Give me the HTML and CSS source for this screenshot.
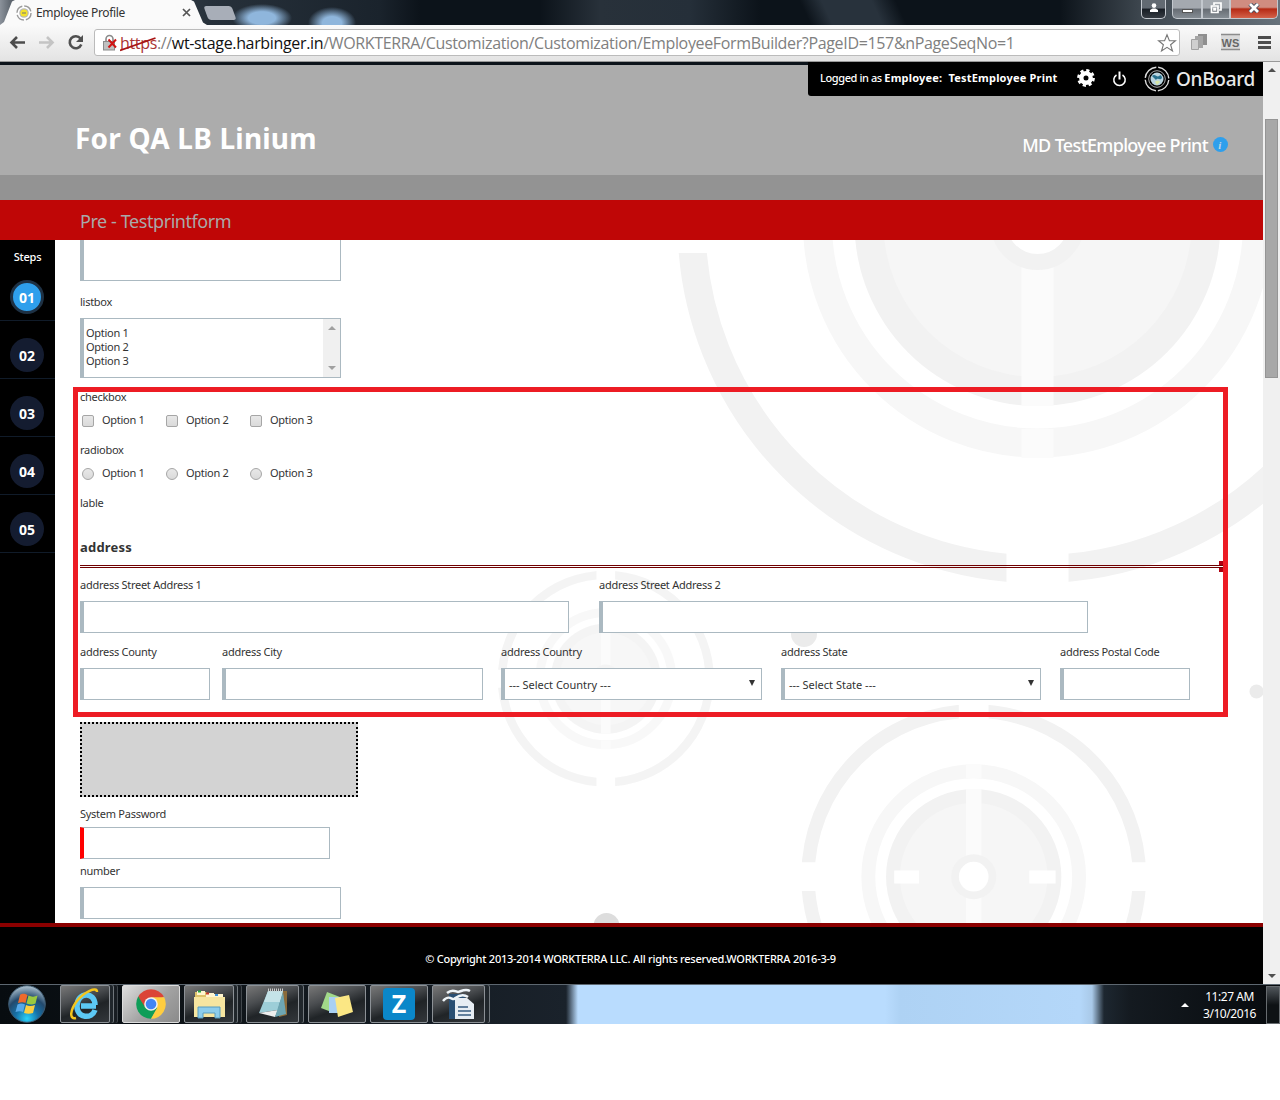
FILE: index.html
```html
<!DOCTYPE html>
<html lang="en">
<head>
  <meta charset="UTF-8">
  <title>Employee Profile</title>
  <link rel="stylesheet" href="styles.css">
</head>
<body>
  <div class="tabstrip">
    <div class="tab">
      <svg width="16" height="16" viewBox="0 0 16 16"><circle cx="8" cy="8" r="7" fill="#fff" stroke="#999" stroke-width="1.4" stroke-dasharray="9 2"/><circle cx="8" cy="8" r="4.8" fill="#b9b9b9"/><circle cx="8" cy="8" r="3.6" fill="#f4e22a"/><path d="M6 8h4" stroke="#777"/></svg>
      <span class="tab-title">Employee Profile</span>
      <svg class="tab-close" width="9" height="9" viewBox="0 0 9 9"><path d="M1 1l7 7M8 1l-7 7" stroke="#555" stroke-width="1.7"/></svg>
    </div>
    <div class="newtab"></div>
    <div class="window-buttons">
      <span class="wbtn user"><svg width="10" height="10" viewBox="0 0 10 10"><circle cx="5" cy="2.6" r="2.3" fill="#fff"/><path d="M1 9V7l2.500-1.500h3L9 7v2z" fill="#fff"/></svg></span>
      <span class="wbtn min"><i></i></span>
      <span class="wbtn max"><svg width="12" height="12" viewBox="0 0 12 12"><path d="M4 3V1h7v7H9M1.500 4h6.500v6.500H1.500zM4 6.500h1.500V8H4z" fill="none" stroke="#fff" stroke-width="1.700"/></svg></span>
      <span class="wbtn close"><svg width="12" height="10" viewBox="0 0 12 10"><path d="M2 1l8 8M10 1L2 9" stroke="#434b5c" stroke-width="4.500"/><path d="M2 1l8 8M10 1L2 9" stroke="#fff" stroke-width="2.800"/></svg></span>
    </div>
  </div>

  <div class="toolbar">
    <svg class="nav-icons" width="94" height="35" viewBox="0 0 94 35">
      <path d="M25 17.500H12M17 12l-5.500 5.500L17 23" fill="none" stroke="#4d4d4d" stroke-width="2.600"/>
      <path d="M39 17.500h13M47 12l5.500 5.500L47 23" fill="none" stroke="#c4c4c4" stroke-width="2.600"/>
      <path d="M80.500 13.500a6 6 0 1 0 .8 6" fill="none" stroke="#505050" stroke-width="2.600"/><path d="M83 10v7h-7z" fill="#505050"/>
    </svg>
    <div class="urlbar">
      <svg width="18" height="18" viewBox="0 0 18 18"><path d="M4 8V5a3.500 3.500 0 0 1 7 0v3" fill="none" stroke="#8b8b8b" stroke-width="1.600"/><rect x="1.500" y="7.500" width="11" height="8.500" fill="#c0c0c0" stroke="#8b8b8b"/><path d="M6.500 5.500l7.500 8M14 5.500l-7.500 8" stroke="#d01414" stroke-width="2"/></svg>
      <span class="url"><span class="scheme">https<svg class="strike" width="36" height="15" viewBox="0 0 36 15"><path d="M0 13.500L35.500 1" stroke="#a81414" stroke-width="1.800"/></svg></span>://<b>wt-stage.harbinger.in</b>/WORKTERRA/Customization/Customization/EmployeeFormBuilder?PageID=157&amp;nPageSeqNo=1</span>
      <svg class="star" width="20" height="20" viewBox="0 0 20 20"><path d="M10 1.800l2.400 6h6l-4.800 3.900 1.900 6.300L10 14.300 4.500 18l1.900-6.300L1.600 7.800h6z" fill="#fff" stroke="#777" stroke-width="1.100"/></svg>
    </div>
    <svg width="100" height="35" viewBox="0 0 100 35">
      <path d="M18 9h9v11h-4v-3h-5z" fill="#8f8f8f"/><path d="M15 11h8v12h-8z" fill="#a5a5a5"/><path d="M11.500 14.500h7v10h-7z" fill="#cfcfcf" stroke="#a2a2a2"/>
      <rect x="41" y="9" width="19" height="16" fill="#dadada"/><path d="M41 9.500h19M41 24.500h19" stroke="#8c8c8c" stroke-width="1.600"/>
      <text x="41.500" y="21.500" class="ws">WS</text>
      <path d="M78 12.500h13M78 17.500h13M78 22.500h13" stroke="#4d4d4d" stroke-width="3"/>
    </svg>
  </div>

  <div class="viewport">
    <div class="page">
      <div class="userbar">
        <span class="logged">Logged in as <b>Employee:&nbsp; TestEmployee Print</b></span>
        <svg class="gear" width="18" height="18" viewBox="0 0 18 18"><circle cx="9" cy="9" r="7.600" fill="none" stroke="#fff" stroke-width="2.600" stroke-dasharray="3.200 2.770"/><circle cx="9" cy="9" r="4.700" fill="none" stroke="#fff" stroke-width="4.400"/></svg>
        <svg class="power" width="15" height="16" viewBox="0 0 15 16"><path d="M4.500 4a5.700 5.700 0 1 0 6 0" fill="none" stroke="#fff" stroke-width="1.500"/><path d="M7.500 0.500v8" stroke="#fff" stroke-width="2"/></svg>
        <svg class="logo" width="26" height="26" viewBox="0 0 26 26"><circle cx="13" cy="13" r="11.800" fill="none" stroke="#ddd" stroke-width="1.400" stroke-dasharray="16.500 2" stroke-dashoffset="-1"/><circle cx="13" cy="13" r="8.300" fill="none" stroke="#aaa"/><circle cx="13" cy="13" r="6.500" fill="#b9d4df"/><path d="M8 10c3-3 5 2 7 0s3 1 3 2c-2 3-4-1-6 2z" fill="#27708d"/><path d="M11 16c2-2 5-1 5 0l-3 3z" fill="#d8e6a5"/></svg>
        <span class="brand">OnBoard</span>
      </div>
      <div class="banner">
        <h1>For QA LB Linium</h1>
        <div class="employee"><span>MD TestEmployee Print</span> <svg width="15" height="15" viewBox="0 0 15 15"><circle cx="7.500" cy="7.500" r="7.500" fill="#2e9fec"/><text x="5.300" y="11.600" class="info">i</text></svg></div>
      </div>
      <div class="subbar"></div>
      <div class="titlebar"><span>Pre - Testprintform</span></div>

      <div class="content">
        <div class="steps">
          <div class="steps-head">Steps</div>
          <div class="step active"><span>01</span></div>
          <div class="step"><span>02</span></div>
          <div class="step"><span>03</span></div>
          <div class="step"><span>04</span></div>
          <div class="step"><span>05</span></div>
        </div>

        <div class="main">
          <svg class="pattern" width="1208" height="683" viewBox="55 240 1208 683">
            <defs>
              <!-- target drawn at its largest size, centred on 0,0 -->
              <g id="target">
                <circle r="346" fill="none" stroke="#f2f2f2" stroke-width="28"/>
                <path d="M-31-365h62v60h-62zM-31 305h62v60h-62zM-365-30h60v60h-60zM305-30h60v60h-60z" fill="#fff"/>
                <circle r="220" fill="none" stroke="#f7f7f7" stroke-width="29"/>
                <circle r="183" fill="#f2f2f2"/>
                <circle r="154" fill="#f6f6f6"/>
                <path d="M-16-235h32v29h-32zM-16-183h32v366h-32zM-16 206h32v29h-32z" fill="#fbfbfb"/>
                <circle r="39" fill="#fff" stroke="#f2f2f2" stroke-width="16"/>
                <path d="M-166-13h52v27h-52zM116-13h55v27h-55z" fill="#fff"/>
              </g>
            </defs>
            <use href="#target" transform="translate(1037.500 223)"/>
            <use href="#target" transform="translate(973.700 876.700) scale(.479)"/>
            <use href="#target" transform="translate(605.800 678.700) scale(.3)" opacity=".8"/>
            <g fill="#ebebeb"><circle cx="804" cy="634" r="13"/><circle cx="1256.500" cy="691.500" r="7"/><circle cx="606.500" cy="926" r="13" fill="#ddd"/></g>
          </svg>

          <form class="form">
            <div class="box textarea"></div>
            <label class="l-listbox">listbox</label>
            <div class="box listbox">
              <div class="options">Option 1<br>Option 2<br>Option 3</div>
              <div class="listscroll"><i class="up"></i><i class="down"></i></div>
            </div>
            <label class="l-group">checkbox</label>
            <div class="choices">
              <span><i class="check"></i>Option 1</span><span><i class="check"></i>Option 2</span><span><i class="check"></i>Option 3</span>
            </div>
            <label class="l-group">radiobox</label>
            <div class="choices">
              <span><i class="check radio"></i>Option 1</span><span><i class="check radio"></i>Option 2</span><span><i class="check radio"></i>Option 3</span>
            </div>
            <label class="l-lable">lable</label>
            <h2>address</h2>
            <div class="rule"></div>
            <div class="row">
              <div class="field w489"><label>address Street Address 1</label><div class="box"></div></div>
              <div class="field w489"><label>address Street Address 2</label><div class="box"></div></div>
            </div>
            <div class="row row2">
              <div class="field county"><label>address County</label><div class="box"></div></div>
              <div class="field city"><label>address City</label><div class="box"></div></div>
              <div class="field country"><label>address Country</label><div class="box select"><span>--- Select Country ---</span><i class="arrow"></i></div></div>
              <div class="field state"><label>address State</label><div class="box select"><span>--- Select State ---</span><i class="arrow"></i></div></div>
              <div class="field postal"><label>address Postal Code</label><div class="box"></div></div>
            </div>
            <div class="signature"></div>
            <label class="l-password">System Password</label>
            <div class="box password"></div>
            <label class="l-number">number</label>
            <div class="box number"></div>
          </form>
          <div class="highlight"></div>
        </div>
      </div>

      <div class="footer"><span>© Copyright 2013-2014 WORKTERRA LLC. All rights reserved.WORKTERRA 2016-3-9</span></div>
    </div>
    <div class="scrollbar"><i class="up"></i><div class="thumb"></div><i class="down"></i></div>
  </div>

  <div class="taskbar">
    <svg class="orb" width="40" height="40" viewBox="0 0 40 40">
      <defs><radialGradient id="orb" cx=".5" cy=".9" r=".9"><stop offset="0" stop-color="#29d3fa"/><stop offset=".35" stop-color="#1671a8"/><stop offset=".65" stop-color="#23496c"/><stop offset="1" stop-color="#b4c7d4"/></radialGradient></defs>
      <circle cx="20" cy="20" r="18.300" fill="url(#orb)" stroke="#3d5a70"/>
      <path d="M13 11c3-2 5-1 7.500 0l-2 8c-2-1-4.500-1-7.500 0z" fill="#ee6a2c"/><path d="M21.500 11.500c3 1.500 6 1.500 9 0l-2 8c-3 1.500-6 1-9 0z" fill="#9ac93f"/><path d="M10.500 20.500c3-1.500 5-1 7.500 0l-2 7.500c-2-1-4.500-1-7.500 0z" fill="#56a8e8"/><path d="M19 21c3 1.500 6 1 9 0l-2 8c-3 1-6 1-9 0z" fill="#fbcf41"/>
    </svg>
    <div class="task stack2"><svg width="34" height="34" viewBox="0 0 34 34"><path d="M28 19H13M27 18c0-14-18-13-18 1 0 13 15 13 18 4" fill="none" stroke="#5cc8f4" stroke-width="5.500"/><path d="M8 31c-7 2-6-8 1-17S29-1 29 5" fill="none" stroke="#f4c51d" stroke-width="2.500"/></svg></div>
    <div class="task active"><svg width="30" height="30" viewBox="0 0 30 30"><path d="M15 15L2.200 7.600A14.800 14.800 0 0 1 27.800 7.600z" fill="#db4437"/><path d="M15 15L2.200 7.600A14.800 14.800 0 0 0 15 29.800L21.400 18.700z" fill="#0f9d58"/><path d="M15 8.300h13.200A14.800 14.800 0 0 1 15 29.800l6.200-11z" fill="#ffcd40"/><path d="M15 8.300H2.700L9 18z" fill="#db4437"/><circle cx="15" cy="15" r="6.800" fill="#f1f1f1"/><circle cx="15" cy="15" r="5.300" fill="#4285f4"/></svg></div>
    <div class="task stack2"><svg width="34" height="32" viewBox="0 0 34 32"><path d="M3 4h11l2 2h14v22H3z" fill="#dfc36a"/><path d="M5 3h8v4H5zM14 5h8v4h-8zM22 6h9v4h-9z" fill="#fff6cf"/><path d="M6 3.500h3" stroke="#24a844" stroke-width="2"/><path d="M14 5.500h3" stroke="#c93a2c" stroke-width="2"/><path d="M23 7h3" stroke="#3c91da" stroke-width="2"/><path d="M2 9h31v20H2z" fill="#f6e5a0"/><path d="M6 30V19h22v11h-5v-5H11v5z" fill="#8dcdec" stroke="#579cc0"/></svg></div>
    <div class="task stack1"><svg width="34" height="32" viewBox="0 0 34 32"><path d="M25 3h6v24l-8 2z" fill="#8b6b3a"/><path d="M12 3h15l-5 19-19 3z" fill="#9dced8"/><path d="M12 3h15l-3 11H8z" fill="#c5e3e8"/><path d="M3 25l19-3-3 7z" fill="#eee"/><path d="M27 4l3 22-11 3z" fill="#6ea6b3"/><path d="M12 2h15" stroke="#ccc" stroke-width="3" stroke-dasharray="1 1"/></svg></div>
    <div class="task"><svg width="36" height="32" viewBox="0 0 36 32"><path d="M8 4l13 5-6 16-13-5z" fill="#a2d989"/><path d="M10 9h14v16H10z" fill="#a9d0f2"/><path d="M16 10l14-3 4 17-15 5z" fill="#fbe784"/></svg></div>
    <div class="task"><svg width="32" height="32" viewBox="0 0 32 32"><rect width="32" height="32" rx="4" fill="#0b87c9"/><text x="16" y="25" class="z">Z</text></svg></div>
    <div class="task stack1"><svg width="34" height="32" viewBox="0 0 34 32"><path d="M7 6h16v25H7z" fill="#294f73"/><path d="M13 10h12l7 6v15H13z" fill="#e7edf3"/><path d="M16 19h10M16 23h13M16 27h13" stroke="#375b80" stroke-width="1.500"/><path d="M1 13c6-7 9-1 11-2s7-7 14-2M5 5c6-5 9-1 11-1s7-4 12-1" fill="none" stroke="#eef4f8" stroke-width="2.500"/></svg></div>
    <div class="tray"><i class="tray-up"></i><div class="clock">11:27 AM<br>3/10/2016</div><i class="desktop"></i></div>
  </div>
</body>
</html>
```
FILE: styles.css
```css
* {
  box-sizing: border-box;
}

body {
  margin: 0;
  width: 1280px;
  background: #fff;
  font-family: "Noto Sans", "Open Sans", sans-serif;
  font-size: 11px;
  color: #333;
}

svg {
  display: block;
  flex: none;
}

/* browser window */
.tabstrip {
  display: flex;
  height: 25px;
  background:
    radial-gradient(ellipse 30px 14px at 262px 18px, #8fb6dc 45%, transparent),
    radial-gradient(ellipse 24px 16px at 332px 23px, #8fb6dc 40%, transparent),
    linear-gradient(65deg, transparent 735px, #28323c 755px, #28323c 800px, transparent 822px),
    linear-gradient(90deg, #8b929b 0, #59616a 12px, #27313b 210px, #1a232c 380px, #0c131a 420px, #0c131a 540px, #28313a 600px, #252f39 690px, #0c131a 760px, #0c131a 1060px, #3d464e 1140px, #68737c 1280px);
}

.tab {
  display: flex;
  align-items: center;
  width: 207px;
  padding-left: 16px;
  background: #fafafa;
  clip-path: polygon(0 100%, 4px 88%, 12px 6%, 15px 0, 191px 0, 194px 6%, 203px 90%, 100% 100%);
}

.tab-title {
  width: 90px;
  margin-left: 4px;
  font-size: 12px;
  letter-spacing: -0.35px;
  white-space: nowrap;
}

.tab-close {
  margin-left: 56px;
}

.newtab {
  width: 28px;
  height: 14px;
  margin: 6px 0 0 -1px;
  background: #a8aeb8;
  border-radius: 3px;
  transform: skewX(20deg);
}

.window-buttons {
  display: flex;
  height: 19px;
  margin-left: auto;
  margin-right: 2px;
}

.wbtn {
  display: flex;
  align-items: center;
  justify-content: center;
  width: 28px;
  padding-bottom: 2px;
  border: 1px solid #c3c8ce;
  border-top: none;
  background: linear-gradient(#a4a9af 45%, #666c73 50%, #868d94);
}

.wbtn.user {
  width: 25px;
  margin-right: 6px;
  background: linear-gradient(#626a72 45%, #171d24 50%, #353b42);
  border-radius: 0 0 5px 5px;
}

.wbtn.min {
  width: 30px;
  border-radius: 0 0 0 5px;
}

.wbtn.min i {
  width: 11px;
  height: 4px;
  margin-top: 5px;
  background: #fff;
  border: 1px solid #555;
}

.wbtn.close {
  width: 48px;
  background: linear-gradient(#d08c80 40%, #b52a15 50%, #d4624a);
  border-radius: 0 0 5px 0;
}

.toolbar {
  display: flex;
  height: 37px;
  background: linear-gradient(#fafafa, #e3e3e3);
  border-bottom: 1px solid #999;
}

.urlbar {
  display: flex;
  align-items: center;
  width: 1087px;
  height: 27px;
  margin-top: 4px;
  padding-left: 7px;
  background: #fff;
  border: 1px solid #bbb;
  border-radius: 3px;
}

.url {
  width: 1030px;
  font-family: "Open Sans", sans-serif;
  font-size: 16px;
  line-height: 24px;
  letter-spacing: -0.34px;
  color: #808080;
  white-space: nowrap;
}

.url b {
  font-weight: normal;
  color: #111;
}

.scheme {
  position: relative;
  color: #a33;
}

.strike {
  position: absolute;
  left: 0;
  top: 5px;
}

.star {
  margin-left: 7px;
}

.ws {
  font: bold 11px "Liberation Sans", sans-serif;
  fill: #666;
}

.viewport {
  display: flex;
  height: 922px;
}

.page {
  position: relative;
  width: 1263px;
  border-top: 3px solid #0c131a;
}

.scrollbar {
  display: flex;
  flex-direction: column;
  align-items: center;
  width: 17px;
  padding: 6px 0;
  background: #f0f0f0;
}

.up,
.down {
  width: 0;
  border: 4px solid transparent;
}

.up {
  border-top: none;
  border-bottom-color: #505050;
}

.down {
  border-bottom: none;
  border-top-color: #505050;
}

.thumb {
  width: 13px;
  height: 259px;
  margin: 47px 0 auto;
  background: #a8a8a8;
  border: 1px solid #959595;
}

/* page header */
.userbar {
  position: absolute;
  top: -3px;
  right: 0;
  display: flex;
  align-items: center;
  width: 455px;
  height: 34px;
  padding-left: 12px;
  background: #000;
  border-radius: 0 0 0 3px;
  color: #fff;
}

.logged {
  width: 238px;
  margin-top: -3px;
  font-weight: 500;
  letter-spacing: -0.4px;
  white-space: nowrap;
}

.logged b {
  letter-spacing: 0.2px;
}

.gear {
  margin-left: 19px;
  margin-top: -3px;
}

.power {
  margin-left: 17px;
}

.logo {
  margin-left: 17px;
}

.brand {
  margin-left: 6px;
  font-size: 19px;
  font-weight: 500;
  letter-spacing: -0.3px;
  color: #e8e8e8;
}

.banner {
  display: flex;
  justify-content: space-between;
  height: 110px;
  padding: 54px 35px 0 75px;
  background: #acacac;
  color: #fff;
}

h1 {
  margin: 0;
  font: bold 28px/38px "Noto Sans", sans-serif;
  letter-spacing: 0.2px;
}

.employee {
  display: flex;
  gap: 5px;
  margin-top: 13px;
  font-size: 18px;
  font-weight: 500;
  line-height: 26px;
}

.employee svg {
  margin-top: 5px;
}

.employee span {
  letter-spacing: -0.65px;
}

.info {
  font: italic bold 11px "Liberation Serif", serif;
  fill: #bfd5e5;
}

.subbar {
  height: 25px;
  background: #939393;
}

.titlebar {
  height: 40px;
  padding-left: 80px;
  background: #bf0606;
  color: #a9a9a9;
  font-size: 18px;
  line-height: 43px;
  letter-spacing: -0.43px;
}

/* content */
.content {
  display: flex;
  height: 683px;
}

.steps {
  width: 55px;
  background: #000;
  color: #fff;
  text-align: center;
}

.steps-head {
  height: 23px;
  padding-top: 9px;
  font-weight: 500;
  line-height: 15px;
  letter-spacing: -0.2px;
}

.step {
  display: flex;
  align-items: center;
  height: 58px;
  padding: 11px 0 0 10px;
  border-bottom: 1px solid #101b29;
}

.step span {
  width: 34px;
  height: 34px;
  background: #141c30;
  border-radius: 50%;
  font-size: 14px;
  font-weight: bold;
  line-height: 35px;
}

.step.active span {
  background: #2e9fec;
  border: 3px solid #1e3144;
  line-height: 29px;
}

.main {
  position: relative;
  width: 1208px;
  overflow: hidden;
}

.pattern {
  position: absolute;
  left: 0;
  top: 0;
}

.form {
  position: relative;
  padding-left: 25px;
  letter-spacing: -0.27px;
}

.form label {
  display: block;
  height: 16px;
  line-height: 16px;
  white-space: nowrap;
}

.box {
  height: 32px;
  background: #fff;
  border: 1px solid #abb9c1;
  border-left-width: 4px;
}

.textarea {
  width: 261px;
  height: 41px;
  border-top: none;
}

.form .l-listbox {
  margin: 13px 0 8px;
}

.listbox {
  display: flex;
  justify-content: space-between;
  width: 261px;
  height: 60px;
}

.options {
  padding: 7px 2px;
  line-height: 14px;
}

.listscroll {
  display: flex;
  flex-direction: column;
  justify-content: space-between;
  align-items: center;
  width: 17px;
  padding: 7px 0;
  background: #f0f0f0;
}

.listscroll .up {
  border-bottom-color: #a0a0a0;
}

.listscroll .down {
  border-top-color: #a0a0a0;
}

.form .l-group {
  margin-top: 11px;
}

.choices {
  display: flex;
  height: 16px;
  margin: 7px 0 14px;
  line-height: 16px;
}

.choices span {
  display: flex;
  width: 84px;
}

.choices + .l-group {
  margin-top: 0;
}

.check {
  width: 12px;
  height: 12px;
  margin: 3px 8px 0 2px;
  background: linear-gradient(#e8e8e8, #dadada);
  border: 1px solid #a6a6a6;
  border-radius: 2px;
}

.radio {
  border-radius: 50%;
}

.form .l-lable {
  margin-bottom: 28px;
}

h2 {
  height: 17px;
  margin: 0 0 9px;
  font-size: 13px;
  line-height: 17px;
  letter-spacing: 0.2px;
}

.rule {
  position: relative;
  width: 1143px;
  height: 3px;
  border: 3px double #700000;
  border-width: 3px 0 0;
}

.rule::before,
.rule::after {
  content: "";
  position: absolute;
  right: 0;
  top: -7px;
  width: 4px;
  height: 4px;
  background: #b00010;
}

.rule::after {
  top: 0;
}

.row {
  display: flex;
  gap: 30px;
  margin-top: 9px;
}

.row2 {
  gap: 0;
  margin-top: 11px;
}

.field .box {
  margin-top: 8px;
}

.w489 { width: 489px; }
.county { width: 130px; margin-right: 12px; }
.city { width: 261px; margin-right: 18px; }
.country { width: 261px; margin-right: 19px; }
.state { width: 260px; margin-right: 19px; }
.postal { width: 130px; }

.select {
  display: flex;
  justify-content: space-between;
  align-items: center;
  padding: 0 6px 0 4px;
  letter-spacing: 0;
}

.arrow {
  width: 0;
  margin-top: -2px;
  border: 3px solid transparent;
  border-top: 6px solid #333;
  border-bottom: none;
}

.signature {
  width: 278px;
  height: 75px;
  margin-top: 22px;
  background: #d3d3d3;
  border: 2px dotted #000;
}

.form .l-password {
  margin: 9px 0 5px;
}

.password {
  width: 250px;
  border-left-color: #f00;
}

.form .l-number {
  margin: 4px 0 8px;
}

.number {
  width: 261px;
}

/* red marker frame over the address section */
.highlight {
  position: absolute;
  left: 18px;
  top: 147px;
  width: 1155px;
  height: 330px;
  border: 5px solid #ed1c24;
}

.footer {
  height: 61px;
  padding-right: 2px;
  background: #000;
  border-top: 4px solid #8b0000;
  color: #fff;
  font-weight: 500;
  line-height: 64px;
  letter-spacing: -0.24px;
  text-align: center;
}

/* windows taskbar */
.taskbar {
  display: flex;
  height: 40px;
  background: linear-gradient(90deg, #070c10 0, #10161b 260px, #1a222b 566px, #b9dcfe 578px, #b9dcfe 885px, #aed2f4 900px, #b4d7f9 1080px, #a9c9e8 1092px, #1d2730 1104px, #141a20 1130px, #070a0d);
  border-top: 1px solid #5d6770;
}

.orb {
  margin: -1px 13px 0 7px;
}

.task {
  display: flex;
  align-items: center;
  justify-content: center;
  width: 58px;
  height: 38px;
  margin-right: 4px;
  background: linear-gradient(160deg, #777 0, #4a4d50 35%, #202427 60%, #33373b);
  border: 1px solid #8c9196;
  border-radius: 2px;
}

.task.active {
  background: linear-gradient(135deg, #dedede, #a2a2a2 55%, #8b8b8b);
  border-color: #ddd;
}

.task.stack2 {
  width: 50px;
  margin-right: 12px;
  box-shadow: 3px 0 0 #20262b, 4px 0 0 #70767b, 7px 0 0 #181d22, 8px 0 0 #40464b;
}

.task.stack1 {
  width: 53px;
  margin-right: 9px;
  box-shadow: 4px 0 0 #20262b, 5px 0 0 #70767b;
}

.z {
  font: bold 25px "Open Sans", sans-serif;
  fill: #fff;
  text-anchor: middle;
}

.tray {
  display: flex;
  align-items: center;
  margin-left: auto;
}

.tray-up {
  width: 0;
  border: 4px solid transparent;
  border-top: none;
  border-bottom-color: #fff;
}

.clock {
  width: 77px;
  padding-left: 4px;
  color: #fff;
  font-size: 12px;
  line-height: 17px;
  letter-spacing: -0.45px;
  text-align: center;
}

.desktop {
  width: 14px;
  height: 38px;
  background: linear-gradient(#50565b, #0e1215 50%);
  border: 1px solid #676c70;
}
```
